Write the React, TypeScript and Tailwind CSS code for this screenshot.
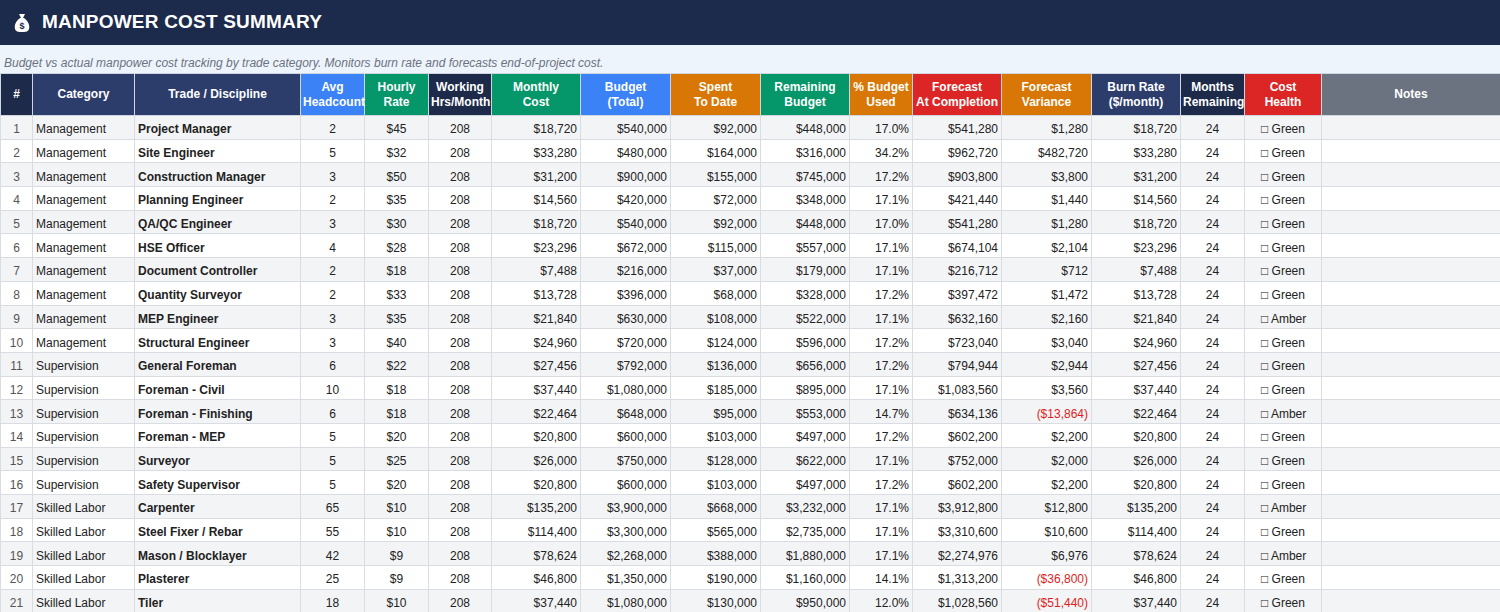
const cols: [string, number, string, string][] = [
  ["#", 32, "bg-[#1e2a4a]", "center"],
  ["Category", 102, "bg-[#2c3c6b]", "left"],
  ["Trade / Discipline", 166, "bg-[#2c3c6b]", "left"],
  ["Avg\nHeadcount", 64, "bg-[#3b82f6]", "center"],
  ["Hourly\nRate", 64, "bg-[#059669]", "center"],
  ["Working\nHrs/Month", 63, "bg-[#1e2a4a]", "center"],
  ["Monthly\nCost", 89, "bg-[#059669]", "right"],
  ["Budget\n(Total)", 90, "bg-[#3b82f6]", "right"],
  ["Spent\nTo Date", 90, "bg-[#d97706]", "right"],
  ["Remaining\nBudget", 89, "bg-[#059669]", "right"],
  ["% Budget\nUsed", 63, "bg-[#d97706]", "right"],
  ["Forecast\nAt Completion", 89, "bg-[#dc2626]", "right"],
  ["Forecast\nVariance", 90, "bg-[#d97706]", "right"],
  ["Burn Rate\n($/month)", 89, "bg-[#2c3c6b]", "right"],
  ["Months\nRemaining", 64, "bg-[#1e2a4a]", "center"],
  ["Cost\nHealth", 77, "bg-[#dc2626]", "left"],
  ["Notes", 179, "bg-[#6b7280]", "left"],
];

const raw = `Management|Project Manager|2|$45|$18,720|$540,000|$92,000|$448,000|17.0%|$541,280|$1,280|Green
Management|Site Engineer|5|$32|$33,280|$480,000|$164,000|$316,000|34.2%|$962,720|$482,720|Green
Management|Construction Manager|3|$50|$31,200|$900,000|$155,000|$745,000|17.2%|$903,800|$3,800|Green
Management|Planning Engineer|2|$35|$14,560|$420,000|$72,000|$348,000|17.1%|$421,440|$1,440|Green
Management|QA/QC Engineer|3|$30|$18,720|$540,000|$92,000|$448,000|17.0%|$541,280|$1,280|Green
Management|HSE Officer|4|$28|$23,296|$672,000|$115,000|$557,000|17.1%|$674,104|$2,104|Green
Management|Document Controller|2|$18|$7,488|$216,000|$37,000|$179,000|17.1%|$216,712|$712|Green
Management|Quantity Surveyor|2|$33|$13,728|$396,000|$68,000|$328,000|17.2%|$397,472|$1,472|Green
Management|MEP Engineer|3|$35|$21,840|$630,000|$108,000|$522,000|17.1%|$632,160|$2,160|Amber
Management|Structural Engineer|3|$40|$24,960|$720,000|$124,000|$596,000|17.2%|$723,040|$3,040|Green
Supervision|General Foreman|6|$22|$27,456|$792,000|$136,000|$656,000|17.2%|$794,944|$2,944|Green
Supervision|Foreman - Civil|10|$18|$37,440|$1,080,000|$185,000|$895,000|17.1%|$1,083,560|$3,560|Green
Supervision|Foreman - Finishing|6|$18|$22,464|$648,000|$95,000|$553,000|14.7%|$634,136|($13,864)|Amber
Supervision|Foreman - MEP|5|$20|$20,800|$600,000|$103,000|$497,000|17.2%|$602,200|$2,200|Green
Supervision|Surveyor|5|$25|$26,000|$750,000|$128,000|$622,000|17.1%|$752,000|$2,000|Green
Supervision|Safety Supervisor|5|$20|$20,800|$600,000|$103,000|$497,000|17.2%|$602,200|$2,200|Green
Skilled Labor|Carpenter|65|$10|$135,200|$3,900,000|$668,000|$3,232,000|17.1%|$3,912,800|$12,800|Amber
Skilled Labor|Steel Fixer / Rebar|55|$10|$114,400|$3,300,000|$565,000|$2,735,000|17.1%|$3,310,600|$10,600|Green
Skilled Labor|Mason / Blocklayer|42|$9|$78,624|$2,268,000|$388,000|$1,880,000|17.1%|$2,274,976|$6,976|Amber
Skilled Labor|Plasterer|25|$9|$46,800|$1,350,000|$190,000|$1,160,000|14.1%|$1,313,200|($36,800)|Green
Skilled Labor|Tiler|18|$10|$37,440|$1,080,000|$130,000|$950,000|12.0%|$1,028,560|($51,440)|Green`;

const rows = raw.split("\n").map((l) => l.split("|"));

export default function App() {
  return (
    <div className="w-[1500px] h-[612px] overflow-hidden bg-white text-[12px] text-[#222]" style={{ fontFamily: '"Liberation Sans", Arial, sans-serif' }}>
      <div className="h-[45px] bg-[#1c2a4b] flex items-center px-[14px] gap-[12px]">
        <svg width="16" height="20" viewBox="0 0 16 20">
          <path d="M5 1h6l-2 4H7z" fill="#fff" />
          <path d="M6 5h4c4 3 6 7 5 11-1 3-4 3-7 3s-6 0-7-3C0 12 2 8 6 5z" fill="#fff" />
          <text x="8" y="16" fontSize="9" textAnchor="middle" fill="#1c2a4b" fontWeight="bold">$</text>
        </svg>
        <span className="text-white font-bold text-[19px] tracking-[0.2px]">MANPOWER COST SUMMARY</span>
      </div>
      <div className="h-[28px] bg-[#eef4fc] flex items-end pb-[1px] px-[4px] italic text-[#6b7280] text-[12px]">
        Budget vs actual manpower cost tracking by trade category. Monitors burn rate and forecasts end-of-project cost.
      </div>
      <table className="border-collapse table-fixed" style={{ width: 1500 }}>
        <colgroup>
          {cols.map((c, i) => <col key={i} style={{ width: c[1] }} />)}
        </colgroup>
        <thead>
          <tr className="h-[42px]">
            {cols.map((c, i) => (
              <th key={i} className={`${c[2]} text-white font-bold text-[12px] leading-[15px] text-center border border-[#cfd6e0] whitespace-pre-line px-[2px]`}>
                {c[0]}
              </th>
            ))}
          </tr>
        </thead>
        <tbody>
          {rows.map((r, i) => {
            const cells = [String(i + 1), r[0], r[1], r[2], r[3], "208", r[4], r[5], r[6], r[7], r[8], r[9], r[10], r[4], "24", "\u25A1 " + r[11], ""];
            return (
              <tr key={i} className={`h-[23.7px] ${i % 2 === 0 ? "bg-[#f3f4f6]" : "bg-white"}`}>
                {cells.map((v, j) => {
                  const al = j === 0 || j === 3 || j === 4 || j === 5 || j === 14 ? "text-center" : j === 1 || j === 2 || j === 15 || j === 16 ? "text-left" : "text-right";
                  const red = j === 12 && v.startsWith("(");
                  return (
                    <td key={j} className={`${al} ${j === 0 ? "text-[#555]" : ""} ${j === 2 ? "font-bold" : ""} ${red ? "text-[#e11d1d]" : ""} ${j === 15 ? "pl-[16px]" : "px-[3px]"} border border-[#d9dde3] whitespace-nowrap overflow-hidden leading-[14px] pt-[4px]`}>
                      {v}
                    </td>
                  );
                })}
              </tr>
            );
          })}
        </tbody>
      </table>
    </div>
  );
}
